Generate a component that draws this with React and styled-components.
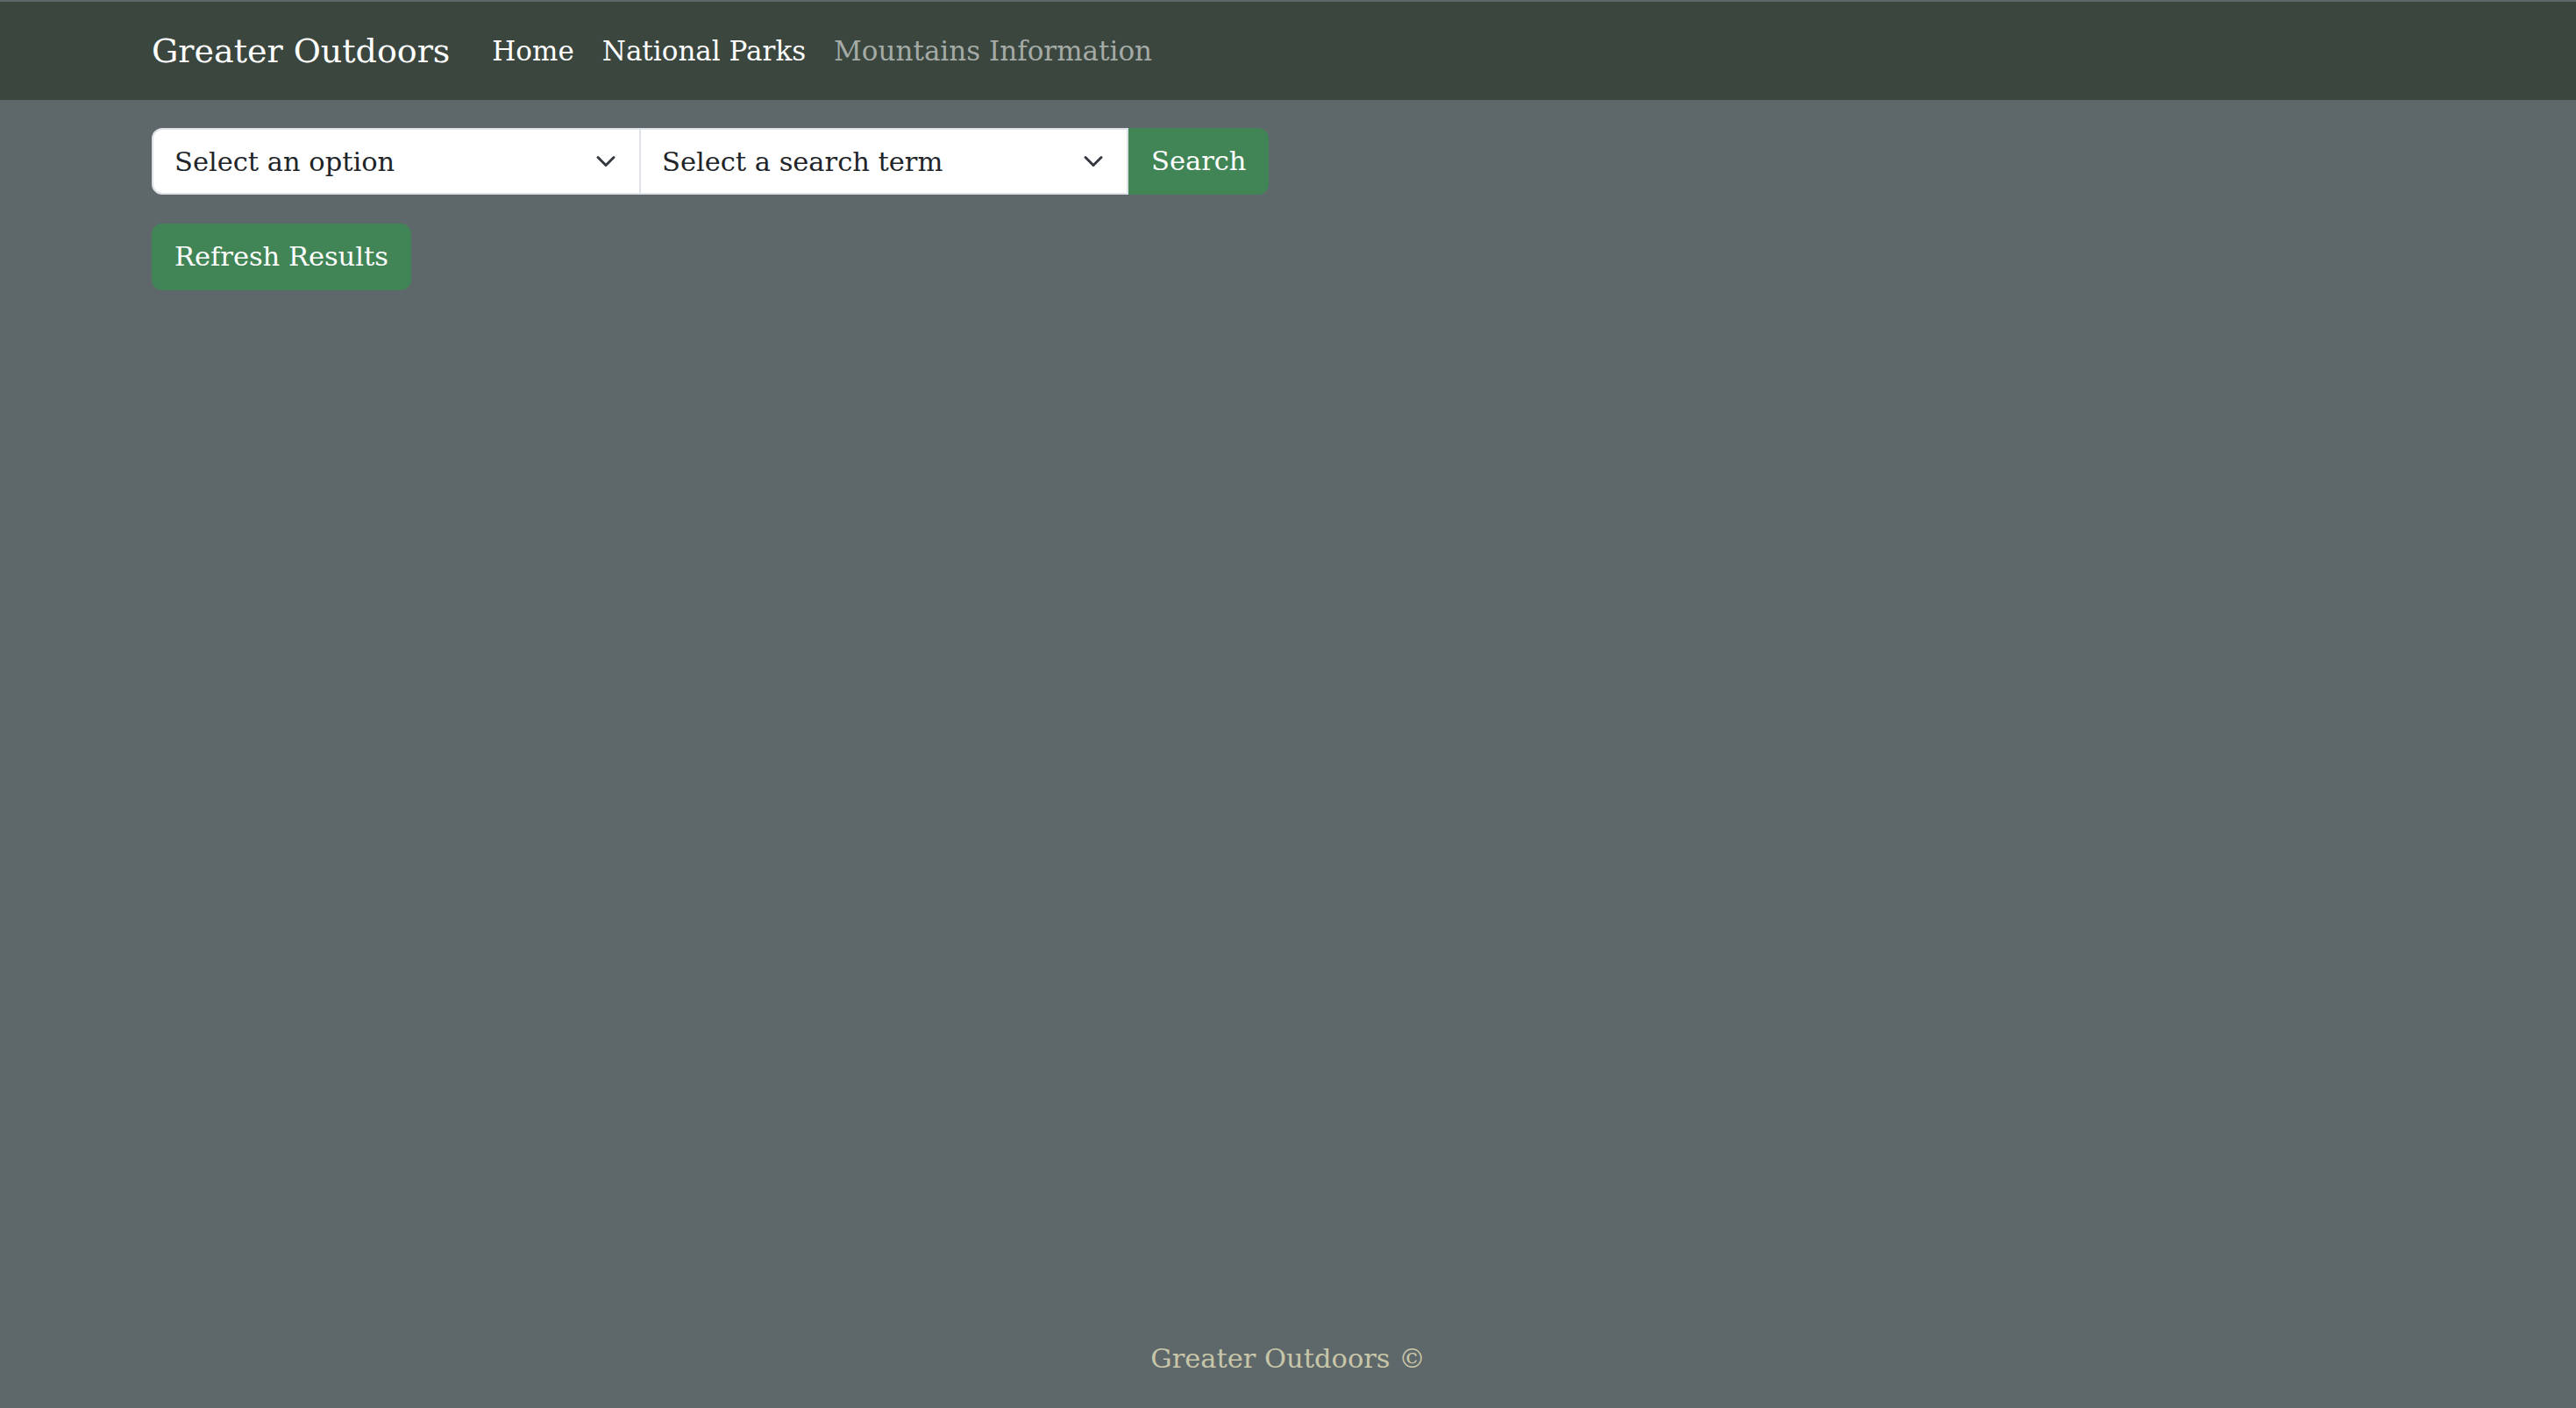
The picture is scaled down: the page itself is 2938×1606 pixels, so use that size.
import styled, { createGlobalStyle } from "styled-components";

const GlobalStyle = createGlobalStyle`
  html, body {
    margin: 0;
    padding: 0;
    background-color: #5e686a;
  }

  body {
    font-family: "DejaVu Serif", "Liberation Serif", serif;
    color: #212529;
  }

  * {
    box-sizing: border-box;
  }
`;

const Page = styled.div`
  min-height: 100vh;
  display: flex;
  flex-direction: column;
  padding-top: 2px;
`;

const Navbar = styled.nav`
  background-color: #3a463e;
  padding: 16px 0;
`;

const Container = styled.div`
  width: 100%;
  max-width: 2640px;
  margin: 0 auto;
  padding: 0 24px;
  display: flex;
  align-items: center;
`;

const Brand = styled.a`
  font-size: 38px;
  line-height: 60px;
  padding: 10px 0;
  margin-right: 32px;
  color: #ffffff;
  text-decoration: none;
  white-space: nowrap;
`;

const NavList = styled.div`
  display: flex;
  align-items: center;
`;

const NavLink = styled.a`
  font-size: 31px;
  line-height: 48px;
  padding: 16px;
  color: ${(props) => (props.$muted ? "#a4aaa5" : "#ffffff")};
  text-decoration: none;
  white-space: nowrap;
`;

const Main = styled.main`
  flex: 1;
  padding-top: 32px;
`;

const Stack = styled.div`
  width: 100%;
  max-width: 2640px;
  margin: 0 auto;
  padding: 0 24px;
  display: flex;
  flex-direction: column;
  align-items: flex-start;
  gap: 33px;
`;

const InputGroup = styled.form`
  display: flex;
  align-items: stretch;
  height: 76px;
`;

const SelectWrap = styled.div`
  position: relative;
  width: 558px;
  margin-left: ${(props) => (props.$first ? "0" : "-2px")};
`;

const Select = styled.select`
  appearance: none;
  width: 100%;
  height: 100%;
  font-family: inherit;
  font-size: 30.5px;
  color: #212529;
  background-color: #ffffff;
  border: 2px solid #dee2e6;
  border-radius: ${(props) => (props.$first ? "12px 0 0 12px" : "0")};
  padding: 0 72px 0 24px;
  outline: none;
`;

const Chevron = styled.svg`
  position: absolute;
  right: 24px;
  top: 50%;
  width: 32px;
  height: 24px;
  margin-top: -12px;
  pointer-events: none;
`;

const Button = styled.button`
  font-family: inherit;
  font-size: 30.5px;
  line-height: 48px;
  color: #ffffff;
  background-color: #418557;
  border: 2px solid #418557;
  padding: 12px 24px;
  border-radius: ${(props) => props.$radius || "12px"};
  white-space: nowrap;
  cursor: pointer;
`;

const Footer = styled.footer`
  text-align: center;
  padding-bottom: 32px;
  font-size: 30.5px;
  line-height: 48px;
  color: #c8c6a9;
`;

const SearchSelect = ({ first, placeholder }) => (
  <SelectWrap $first={first}>
    <Select $first={first} defaultValue="">
      <option value="" disabled>
        {placeholder}
      </option>
    </Select>
    <Chevron viewBox="0 0 16 16">
      <path
        fill="none"
        stroke="#343a40"
        strokeLinecap="round"
        strokeLinejoin="round"
        strokeWidth="2"
        d="m2 5 6 6 6-6"
      />
    </Chevron>
  </SelectWrap>
);

export default function App() {
  return (
    <>
      <GlobalStyle />
      <Page>
        <Navbar>
          <Container>
            <Brand href="#">Greater Outdoors</Brand>
            <NavList>
              <NavLink href="#">Home</NavLink>
              <NavLink href="#">National Parks</NavLink>
              <NavLink href="#" $muted>
                Mountains Information
              </NavLink>
            </NavList>
          </Container>
        </Navbar>
        <Main>
          <Stack>
            <InputGroup onSubmit={(e) => e.preventDefault()}>
              <SearchSelect first placeholder="Select an option" />
              <SearchSelect placeholder="Select a search term" />
              <Button type="submit" $radius="0 12px 12px 0">
                Search
              </Button>
            </InputGroup>
            <Button type="button">Refresh Results</Button>
          </Stack>
        </Main>
        <Footer>Greater Outdoors ©</Footer>
      </Page>
    </>
  );
}
